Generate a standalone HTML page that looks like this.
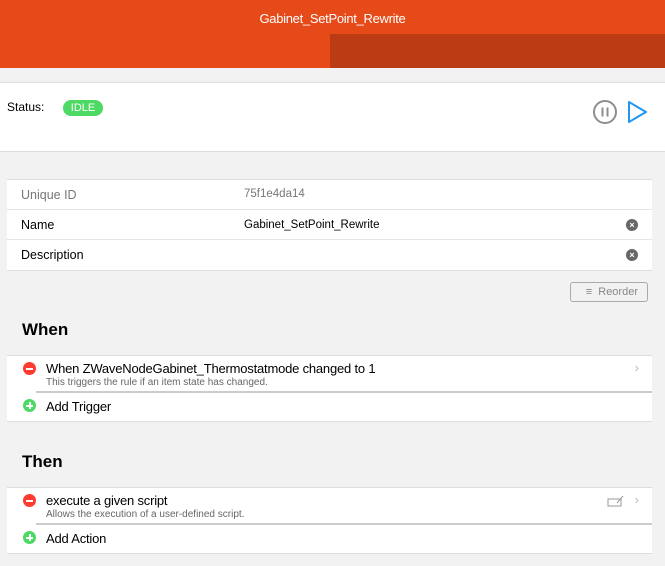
<!DOCTYPE html><html><head><style>
*{box-sizing:border-box;margin:0;padding:0}
body{width:665px;height:566px;background:#f2f2f2;font-family:"Liberation Sans",sans-serif;position:relative;overflow:hidden;color:#000}
.a{position:absolute}
.hdr{left:0;top:0;width:665px;height:68px;background:#e64a19}
.dk{left:330px;top:34px;width:335px;height:34px;background:#bb3b15}
.ttl{left:0;top:11px;width:665px;text-align:center;color:#fff;font-size:13px;letter-spacing:-0.3px}
.card{background:#fff;border-top:1px solid #ddd;border-bottom:1px solid #ddd}
.row{position:absolute;left:0;right:0;height:30px;border-bottom:1px solid #e4e4e4;font-size:12.5px}
.row span{position:absolute;top:8px}
.x{position:absolute;right:14px;top:9px;width:12px;height:12px;border-radius:50%;background:#666;color:#fff;font-size:9px;line-height:12px;text-align:center;font-weight:bold}
h2{position:absolute;font-size:17px;font-weight:bold;left:22px}
.ic{position:absolute;left:23px;width:13px;height:13px;border-radius:50%}
.ic.m::after{content:"";position:absolute;left:3px;top:5.5px;width:7px;height:2px;background:#fff}
.ic.p::after{content:"";position:absolute;left:3px;top:5.5px;width:7px;height:2px;background:#fff}
.ic.p::before{content:"";position:absolute;left:5.5px;top:3px;width:2px;height:7px;background:#fff}
.t1{position:absolute;left:46px;font-size:13px;letter-spacing:-0.2px}
.t2{position:absolute;left:46px;font-size:10px;color:#666}
.chev{position:absolute;right:26px;color:#bbb;font-size:13px}
</style></head><body>
<div class="a hdr"></div><div class="a dk"></div>
<div class="a ttl">Gabinet_SetPoint_Rewrite</div>
<div class="a card" style="left:0;top:82px;width:665px;height:70px"></div>
<div class="a" style="left:7px;top:100px;font-size:12px">Status:</div>
<div class="a" style="left:63px;top:100px;width:40px;height:16px;border-radius:8px;background:#4cd964;color:#fff;font-size:11px;text-align:center;line-height:16px">IDLE</div>
<svg class="a" style="left:592px;top:99px" width="26" height="26"><circle cx="13" cy="13" r="11" fill="none" stroke="#8e8e8e" stroke-width="2"/><rect x="9.5" y="8.5" width="2" height="9" fill="#8e8e8e"/><rect x="14.5" y="8.5" width="2" height="9" fill="#8e8e8e"/></svg>
<svg class="a" style="left:627px;top:100px" width="22" height="24"><path d="M2 2 L19 12 L2 22 Z" fill="none" stroke="#2196f3" stroke-width="2" stroke-linejoin="round"/></svg>
<div class="a card" style="left:7px;top:179px;width:645px;height:92px">
<div class="row" style="top:0"><span style="left:14px;color:#777">Unique ID</span><span style="left:237px;color:#777;font-size:11.5px;top:8px">75f1e4da14</span></div>
<div class="row" style="top:30px"><span style="left:14px">Name</span><span style="left:237px;font-size:11.5px;top:9px">Gabinet_SetPoint_Rewrite</span><div class="x">×</div></div>
<div class="row" style="top:60px;border:none"><span style="left:14px">Description</span><div class="x">×</div></div>
</div>
<div class="a" style="left:570px;top:282px;width:78px;height:20px;border:1px solid #aaa;border-radius:3px;color:#888;font-size:11px;line-height:18px;text-align:right;padding-right:9px">≡&nbsp; Reorder</div>
<h2 style="top:320px">When</h2>
<div class="a card" style="left:7px;top:355px;width:645px;height:67px"></div>
<div class="a" style="left:36px;top:391px;width:616px;height:2px;background:#ccc"></div>
<div class="ic m" style="top:362px;background:#ff3b30"></div>
<div class="t1" style="top:361px">When ZWaveNodeGabinet_Thermostatmode changed to 1</div>
<div class="t2" style="top:377px">This triggers the rule if an item state has changed.</div>
<div class="chev" style="top:360px">›</div>
<div class="ic p" style="top:399px;background:#4cd964"></div>
<div class="t1" style="top:399px">Add Trigger</div>
<h2 style="top:452px">Then</h2>
<div class="a card" style="left:7px;top:487px;width:645px;height:67px"></div>
<div class="a" style="left:36px;top:523px;width:616px;height:2px;background:#ccc"></div>
<div class="ic m" style="top:494px;background:#ff3b30"></div>
<div class="t1" style="top:493px">execute a given script</div>
<div class="t2" style="top:509px">Allows the execution of a user-defined script.</div>
<svg class="a" style="left:607px;top:494px" width="18" height="14"><rect x="1" y="5" width="13" height="7" fill="none" stroke="#999"/><path d="M10 9 L16 2" stroke="#999"/></svg>
<div class="chev" style="top:492px">›</div>
<div class="ic p" style="top:531px;background:#4cd964"></div>
<div class="t1" style="top:531px">Add Action</div>
</body></html>
